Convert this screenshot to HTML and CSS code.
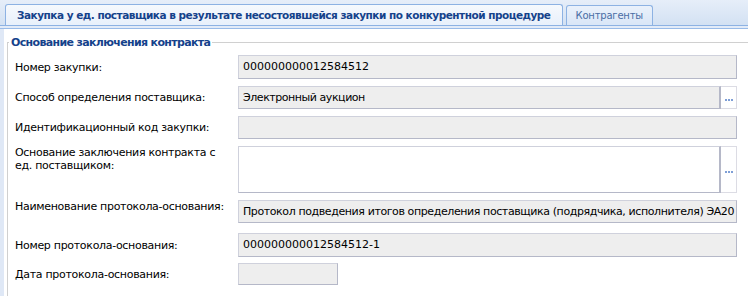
FILE: index.html
```html
<!DOCTYPE html>
<html lang="ru">
<head>
    <meta charset="UTF-8">
    <title>Закупка у ед. поставщика</title>
    <link rel="stylesheet" href="styles.css">
</head>
<body>

    <div class="panel">
        <!-- Tabs -->
        <div class="tabbar">
            <div class="tab tab-active">Закупка у ед. поставщика в результате несостоявшейся закупки по конкурентной процедуре</div>
            <div class="tab">Контрагенты</div>
        </div>
        <div class="tab-spacer"></div>

        <div class="panel-body">
            <fieldset class="group">
                <legend>Основание заключения контракта</legend>

                <div class="row">
                    <label>Номер закупки:</label>
                    <div class="field ro tall">000000000012584512</div>
                </div>

                <div class="row">
                    <label>Способ определения поставщика:</label>
                    <div class="combo">
                        <div class="field ro txt">Электронный аукцион</div>
                        <div class="trigger"><svg width="8" height="2" viewBox="0 0 8 2"><rect x="0" width="2" height="2" fill="#7f9fd6"/><rect x="3" width="2" height="2" fill="#7f9fd6"/><rect x="6" width="2" height="2" fill="#7f9fd6"/></svg></div>
                    </div>
                </div>

                <div class="row">
                    <label>Идентификационный код закупки:</label>
                    <div class="field ro"></div>
                </div>

                <div class="row row-top">
                    <label>Основание заключения контракта с<br>ед. поставщиком:</label>
                    <div class="combo combo-area">
                        <div class="field area"></div>
                        <div class="trigger"><svg width="8" height="2" viewBox="0 0 8 2"><rect x="0" width="2" height="2" fill="#7f9fd6"/><rect x="3" width="2" height="2" fill="#7f9fd6"/><rect x="6" width="2" height="2" fill="#7f9fd6"/></svg></div>
                    </div>
                </div>

                <div class="row row-top row-spaced">
                    <label>Наименование протокола-основания:</label>
                    <div class="field ro txt txt-wide">Протокол подведения итогов определения поставщика (подрядчика, исполнителя) ЭА20</div>
                </div>

                <div class="row row-close">
                    <label>Номер протокола-основания:</label>
                    <div class="field ro tall">000000000012584512-1</div>
                </div>

                <div class="row">
                    <label>Дата протокола-основания:</label>
                    <div class="field ro date"></div>
                </div>
            </fieldset>
        </div>
    </div>

</body>
</html>
```

FILE: styles.css
```css
/* Reset and base styles */
* {
    box-sizing: border-box;
    margin: 0;
    padding: 0;
}
body {
    font-family: "DejaVu Sans", Verdana, sans-serif;
    font-size: 11px;
    color: #000000;
    background: #ffffff;
    overflow: hidden;
}
.panel {
    width: 760px;
    height: 296px;
    overflow: hidden;
}
/* Tab strip */
.tabbar {
    display: flex;
    align-items: flex-end;
    height: 25px;
    padding-left: 5px;
    background: linear-gradient(to bottom, #e6eef9, #d3e1f3);
}
.tab {
    height: 20px;
    margin-right: 3px;
    padding: 0 9px;
    line-height: 19px;
    font-size: 10px;
    letter-spacing: -0.2px;
    color: #4a6ea5;
    background: linear-gradient(to bottom, #eaf1fb, #d9e6f7);
    border: 1px solid #8db2e3;
    border-bottom: none;
    border-radius: 3px 3px 0 0;
    white-space: nowrap;
}
.tab-active {
    height: 21px;
    padding: 0 11px;
    line-height: 21px;
    font-size: 10.5px;
    font-weight: bold;
    color: #15428b;
    background: linear-gradient(to bottom, #f6f9fd, #e8f0fb);
    letter-spacing: -0.5px;
}
.tab-spacer {
    height: 4px;
    background: #e2ebf8;
    border-top: 1px solid #8db2e3;
    border-bottom: 1px solid #99bbe8;
}
/* Body */
.panel-body {
    height: 267px;
    border-left: 4px solid #dfe8f6;
    padding: 7px 0 0 3px;
}
.group {
    border: 1px solid #d0d0d0;
    border-right: none;
    border-bottom: none;
    padding: 6px 0 0 7px;
    height: 300px;
}
.group legend {
    margin-left: -6px;
    padding: 0 2px;
    font-weight: bold;
    font-size: 11px;
    color: #15428b;
    letter-spacing: -0.65px;
}
/* Form rows */
.row {
    display: flex;
    align-items: center;
    margin-bottom: 7px;
}
.row-top {
    align-items: flex-start;
}
.row-spaced {
    margin-bottom: 10px;
}
.row-close {
    margin-bottom: 6px;
}
.row label {
    width: 223px;
    flex-shrink: 0;
    line-height: 13px;
    letter-spacing: -0.3px;
}
.field {
    width: 499px;
    height: 23px;
    padding: 0 4px;
    line-height: 21px;
    border: 1px solid #cfd1dc;
    border-bottom-color: #b5b8c8;
    border-right-color: #b5b8c8;
    white-space: nowrap;
    overflow: hidden;
}
.ro {
    background: #eeeeee;
}
.txt {
    letter-spacing: -0.45px;
}
.txt-wide {
    letter-spacing: -0.4px;
}
.tall {
    height: 24px;
    line-height: 22px;
}
.date {
    width: 100px;
    height: 22px;
}
.combo {
    display: flex;
    width: 499px;
}
.combo .field {
    flex: 1;
    width: auto;
    border-right: 2px solid #b5b8c8;
}
.trigger {
    width: 16px;
    display: flex;
    align-items: center;
    justify-content: center;
    padding-top: 5px;
    background: #ffffff;
    border: 1px solid #dcdce4;
    border-left: none;
}
.combo-area .field {
    height: 47px;
}
.area {
    background: #ffffff;
}
```
